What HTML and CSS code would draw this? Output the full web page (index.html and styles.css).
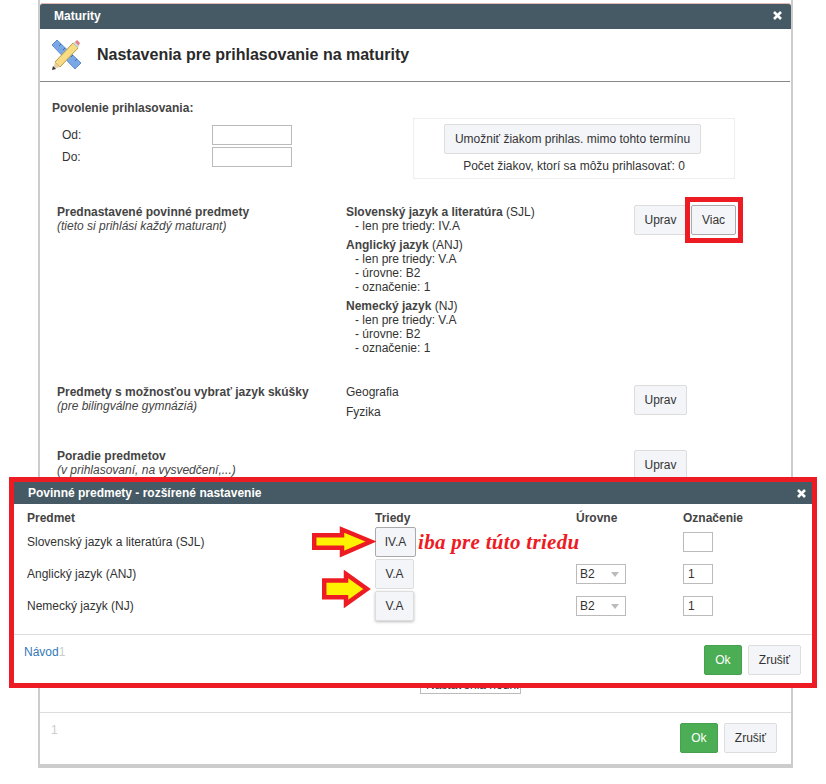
FILE: index.html
```html
<!DOCTYPE html>
<html lang="sk">
  <head>
    <meta charset="UTF-8" />
    <meta name="viewport" content="width=device-width, initial-scale=1.0" />
    <title>Maturity</title>
    <link rel="stylesheet" href="styles.css">
  </head>
  <body>
    <section class="dialog">
      <header class="titleBar">
        <span>Maturity</span>
        <svg class="close" width="9" height="9" viewBox="0 0 9 9"><path d="M1 1l7 7M8 1l-7 7" stroke="#fff" stroke-width="2.6" /></svg>
      </header>
      <div class="heading">
        <svg class="headIcon" width="31" height="32" viewBox="0 0 31 32">
          <polygon points="1,6 6,1 30,24 24,30" fill="#7aa7e6" stroke="#5f8cc9" stroke-width="1" />
          <path d="M8 7l2-2M12 11l2-2M16 15l2-2M20 18l2-2M24 22l2-2" stroke="#3f68a5" stroke-width="1" />
          <polygon points="4,23 22,4 27,9 9,28" fill="#f7dc83" stroke="#b79a4a" stroke-width="1" />
          <polygon points="23,4 26,1 29,4 27,8" fill="#e77f7f" />
          <polygon points="22,4 24,3 28,7 27,9" fill="#c9dbe8" />
          <polygon points="4,23 9,28 2,30" fill="#e9cfa6" />
          <polygon points="1,31 2,27 5,30" fill="#333" />
        </svg>
        <h1>Nastavenia pre prihlasovanie na maturity</h1>
      </div>

      <div class="content">
        <div class="termRow">
          <div class="dates">
            <p class="strong">Povolenie prihlasovania:</p>
            <label class="dateRow">Od:<input type="text" /></label>
            <label class="dateRow">Do:<input type="text" /></label>
          </div>
          <div class="outsideBox">
            <button class="btn wide">Umožniť žiakom prihlas. mimo tohto termínu</button>
            <p>Počet žiakov, ktorí sa môžu prihlasovať: 0</p>
          </div>
        </div>

        <div class="setting first">
          <div class="label">
            <p class="strong">Prednastavené povinné predmety</p>
            <p class="note">(tieto si prihlási každý maturant)</p>
          </div>
          <div class="subjects">
            <div class="subject">
              <p><b>Slovenský jazyk a literatúra</b> (SJL)</p>
              <p class="sub">- len pre triedy: IV.A</p>
            </div>
            <div class="subject">
              <p><b>Anglický jazyk</b> (ANJ)</p>
              <p class="sub">- len pre triedy: V.A</p>
              <p class="sub">- úrovne: B2</p>
              <p class="sub">- označenie: 1</p>
            </div>
            <div class="subject">
              <p><b>Nemecký jazyk</b> (NJ)</p>
              <p class="sub">- len pre triedy: V.A</p>
              <p class="sub">- úrovne: B2</p>
              <p class="sub">- označenie: 1</p>
            </div>
          </div>
          <div class="actions">
            <button class="btn edit">Uprav</button>
            <button class="btn marked">Viac</button>
          </div>
        </div>

        <div class="setting second">
          <div class="label">
            <p class="strong">Predmety s možnosťou vybrať jazyk skúšky</p>
            <p class="note">(pre bilingválne gymnáziá)</p>
          </div>
          <div class="plainList">
            <p>Geografia</p>
            <p>Fyzika</p>
          </div>
          <div class="actions">
            <button class="btn edit">Uprav</button>
          </div>
        </div>

        <div class="setting third">
          <div class="label">
            <p class="strong">Poradie predmetov</p>
            <p class="note">(v prihlasovaní, na vysvedčení,...)</p>
          </div>
          <div></div>
          <div class="actions low">
            <button class="btn edit">Uprav</button>
          </div>
        </div>

        <div class="hiddenRow">
          <span class="flat">Nastavenia hodn.</span>
        </div>
      </div>

      <footer class="footer">
        <span class="pageNo">1</span>
        <div class="footerBtns">
          <button class="btn ok">Ok</button>
          <button class="btn">Zrušiť</button>
        </div>
      </footer>
    </section>

    <section class="popUp">
      <header class="titleBar small">
        <span>Povinné predmety - rozšírené nastavenie</span>
        <svg class="close" width="9" height="9" viewBox="0 0 9 9"><path d="M1 1l7 7M8 1l-7 7" stroke="#fff" stroke-width="2.6" /></svg>
      </header>
      <div class="grid">
        <div class="gridHead">Predmet</div>
        <div class="gridHead">Triedy</div>
        <div class="gridHead">Úrovne</div>
        <div class="gridHead">Označenie</div>

        <div>Slovenský jazyk a literatúra (SJL)</div>
        <div><button class="btn cls active">IV.A</button></div>
        <div></div>
        <div><input class="mark" type="text" /></div>

        <div>Anglický jazyk (ANJ)</div>
        <div><button class="btn cls">V.A</button></div>
        <div><span class="pick">B2</span></div>
        <div><input class="mark" type="text" value="1" /></div>

        <div>Nemecký jazyk (NJ)</div>
        <div><button class="btn cls shadow">V.A</button></div>
        <div><span class="pick">B2</span></div>
        <div><input class="mark" type="text" value="1" /></div>
      </div>
      <footer class="popFooter">
        <span class="guide"><a href="#">Návod</a><span class="pageNo">1</span></span>
        <div class="footerBtns">
          <button class="btn ok">Ok</button>
          <button class="btn">Zrušiť</button>
        </div>
      </footer>
    </section>

    <svg class="arrow one" width="64" height="32" viewBox="0 0 64 32">
      <polygon points="2.2,9.2 30,9.2 30,3.5 59,15.5 30,28 30,21.8 2.2,21.8" fill="#fff200" stroke="#ed1c24" stroke-width="4.5" />
    </svg>
    <svg class="arrow two" width="50" height="38" viewBox="0 0 50 38">
      <polygon points="2.2,10.5 24,10.5 24,4 45,19 24,34 24,27.2 2.2,27.2" fill="#fff200" stroke="#ed1c24" stroke-width="4.5" />
    </svg>
    <span class="scribble">iba pre túto triedu</span>
  </body>
</html>
```

FILE: styles.css
```css
html,
body {
  height: 784px;
  overflow: hidden;
}

body {
  position: relative;
  margin: 0;
  background: #fff;
  font-family: "Liberation Sans", Arial, sans-serif;
  font-size: 12px;
  color: #333;
}

p {
  margin: 0;
}

.dialog {
  box-sizing: border-box;
  width: 755px;
  height: 768px;
  margin-left: 38px;
  padding-top: 3px;
  border: solid #ccc;
  border-width: 0 2px 4px 2px;
  display: flex;
  flex-direction: column;
  background: #fff;
}

.titleBar {
  box-sizing: border-box;
  display: flex;
  justify-content: space-between;
  align-items: center;
  height: 26px;
  padding: 0 9px 2px 14px;
  background: #465a65;
  border-top: 1px solid #e6b8b8;
  color: #fff;
  font-weight: bold;
  border-radius: 3px 3px 0 0;
}

.heading {
  display: flex;
  align-items: center;
  height: 52px;
  margin-right: 1px;
  padding-left: 11px;
  border-bottom: 1px solid #888;
}

.headIcon {
  margin-right: 15px;
}

h1 {
  margin: 0;
  font-size: 16px;
  color: #2a2a2a;
}

.content {
  flex: 1;
  padding: 19px 0 0 12px;
}

.strong,
b {
  font-weight: bold;
  color: #444;
}

.termRow {
  display: flex;
}

.dates {
  width: 361px;
}

.dates .strong {
  margin-bottom: 10px;
  line-height: 14px;
}

.dateRow {
  display: flex;
  justify-content: space-between;
  width: 230px;
  height: 20px;
  margin: 2px 0 0 10px;
  line-height: 20px;
}

input {
  box-sizing: border-box;
  width: 80px;
  height: 20px;
  padding: 0 4px;
  border: 1px solid #bbb;
  font: 12px "Liberation Sans", Arial, sans-serif;
  color: #333;
}

.outsideBox {
  box-sizing: border-box;
  width: 322px;
  height: 61px;
  margin-top: 17px;
  border: 1px solid #eee;
  padding-top: 5px;
  text-align: center;
}

.outsideBox p {
  margin-top: 5px;
}

.btn {
  box-sizing: border-box;
  height: 30px;
  padding: 0 10px;
  border: 1px solid #ddd;
  border-radius: 2px;
  background: #f4f5f9;
  font: 12px "Liberation Sans", Arial, sans-serif;
  color: #333;
}

.wide {
  display: block;
  width: 257px;
  margin-left: 30px;
  padding: 0;
}

.setting {
  display: grid;
  grid-template-columns: 289px 288px auto;
  padding-left: 5px;
}

.first {
  margin-top: 26px;
  height: 180px;
}

.second {
  height: 64px;
}

.third {
  height: 60px;
}

.label {
  line-height: 14px;
}

.note {
  font-style: italic;
  color: #444;
}

.subjects {
  line-height: 14px;
}

.subject {
  margin-bottom: 5px;
}

.sub {
  padding-left: 9px;
}

.plainList p {
  line-height: 14px;
  margin-bottom: 6px;
}

.actions {
  display: flex;
  align-items: flex-start;
  gap: 4px;
}

.low {
  margin-top: 1px;
}

.edit {
  width: 53px;
  padding: 0;
}

.marked {
  position: relative;
  width: 45px;
  padding: 0;
  border-color: #aaa;
}

/* red frame painted on the screenshot */
.marked::after {
  content: "";
  position: absolute;
  left: -7px;
  right: -8px;
  top: -9px;
  bottom: -9px;
  border: 5px solid #ed1c24;
}

.hiddenRow {
  margin-top: 165px;
  padding-left: 368px;
}

.flat {
  display: block;
  box-sizing: border-box;
  width: 101px;
  height: 20px;
  padding-left: 5px;
  border: 1px solid #bbb;
  line-height: 20px;
}

.footer {
  box-sizing: border-box;
  display: flex;
  justify-content: space-between;
  height: 52px;
  padding: 10px 14px 0 11px;
  border-top: 1px solid #ddd;
}

.pageNo {
  color: #ccc;
}

.footerBtns {
  display: flex;
  gap: 6px;
}

.ok {
  width: 38px;
  padding: 0;
  background: #4cae54;
  border-color: #46a04e;
  color: #fff;
}

.popUp {
  position: absolute;
  left: 9px;
  top: 477px;
  box-sizing: border-box;
  width: 808px;
  height: 211px;
  border: 5px solid #ed1c24;
  background: #fff;
}

.small {
  height: 22px;
  padding: 0 6px 0 14px;
  border: 0;
  border-radius: 0;
}

.grid {
  box-sizing: border-box;
  display: grid;
  grid-template-columns: 348px 201px 107px auto;
  grid-template-rows: 22px 32px 32px 32px;
  align-items: center;
  height: 131px;
  padding-left: 13px;
  border-bottom: 1px solid #ddd;
}

.gridHead {
  font-weight: bold;
  color: #444;
  align-self: start;
  height: 16px;
  padding-top: 7px;
}

.cls {
  display: block;
  width: 39px;
  height: 30px;
  padding: 0;
}

.active {
  width: 41px;
  border-color: #aaa;
}

.shadow {
  box-shadow: 0 1px 3px #bbb;
}

.pick {
  display: block;
  position: relative;
  box-sizing: border-box;
  width: 50px;
  height: 20px;
  padding-left: 3px;
  border: 1px solid #bbb;
  line-height: 18px;
}

.pick::after {
  content: "";
  position: absolute;
  right: 6px;
  top: 7px;
  border: 4px solid transparent;
  border-top: 5px solid #bbb;
}

.mark {
  width: 30px;
}

.popFooter {
  display: flex;
  justify-content: space-between;
  padding: 10px 11px 0 10px;
}

a {
  color: #337ab7;
  text-decoration: none;
}

.arrow {
  position: absolute;
}

.one {
  left: 312px;
  top: 526px;
}

.two {
  left: 322px;
  top: 570px;
}

.scribble {
  position: absolute;
  left: 418px;
  top: 530px;
  font-family: "Liberation Serif", serif;
  font-style: italic;
  font-weight: bold;
  font-size: 21px;
  letter-spacing: 0.3px;
  color: #ed1c24;
}
```
